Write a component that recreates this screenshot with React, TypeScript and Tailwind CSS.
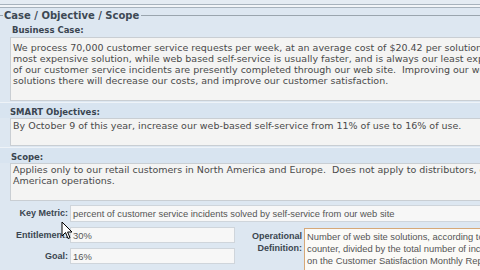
import React from 'react';

const boxText = 'font-["DejaVu_Sans",Verdana,sans-serif] text-[9.5px] leading-[11px] text-[#4a4a4a] whitespace-pre';
const label = 'font-["DejaVu_Sans",Verdana,sans-serif] font-bold text-[8.5px] leading-[11px] text-[#3a4550]';
const smallLabel = 'font-["Liberation_Sans",Arial,sans-serif] font-bold text-[9px] leading-[11px] text-[#3a4550]';
const inputText = 'font-["Liberation_Sans",Arial,sans-serif] text-[9.4px] leading-[11px] text-[#555]';

const Cursor: React.FC = () => (
  <svg className="absolute left-[61px] top-[221px]" width="12" height="19" viewBox="0 0 12 19">
    <path d="M1 1 L1 15 L4.5 11.5 L7 17.5 L9 16.7 L6.6 11 L11 11 Z" fill="#fff" stroke="#000" strokeWidth="1" />
  </svg>
);

const App: React.FC = () => {
  return (
    <div className="relative w-[480px] h-[270px] overflow-hidden bg-[#dde7f1] leading-[11px]">
      {/* top separator */}
      <div className="h-[4px] bg-[#e4ebf2]" />
      <div className="h-[1px] bg-[#a7b2bc]" />
      <div className="h-[2px] bg-[#f2f5f8]" />
      <div className="h-[1px] bg-[#a7b2bc]" />

      {/* legend */}
      <div className="flex items-center mt-[1px] h-[13px]">
        <div className="w-[3px] h-[1px] bg-[#9aa5ae]" />
        <div className='shrink-0 px-[1px] font-["DejaVu_Sans",Verdana,sans-serif] font-bold text-[10px] leading-[12px] text-[#3d4954]'>
          Case / Objective / Scope
        </div>
        <div className="flex-1 h-[1px] bg-[#9aa5ae] ml-[1px]" />
      </div>

      {/* business case */}
      <div className={`pl-[12px] pt-[3px] h-[15px] ${label}`}>Business Case:</div>
      <div className={`ml-[10px] w-[480px] h-[64px] border border-[#c9ced3] bg-[#f4f4f3] px-[2px] pt-[4px] ${boxText}`}>
        <div>We process 70,000 customer service requests per week, at an average cost of $20.42 per solution.  Email is the</div>
        <div>most expensive solution, while web based self-service is usually faster, and is always our least expensive option.</div>
        <div>of our customer service incidents are presently completed through our web site.  Improving our web site</div>
        <div>solutions there will decrease our costs, and improve our customer satisfaction.</div>
      </div>

      {/* smart objectives */}
      <div className={`mt-[1px] pl-[10px] pt-[4px] h-[16px] bg-[#d8e4f0] border-t border-[#eef3f8] ${label}`}>SMART Objectives:</div>
      <div className={`ml-[10px] w-[480px] h-[28px] border border-[#c9ced3] bg-[#f4f4f3] px-[2px] pt-[1px] ${boxText}`}>
        By October 9 of this year, increase our web-based self-service from 11% of use to 16% of use.
      </div>

      {/* scope */}
      <div className={`mt-[1px] pl-[11px] pt-[4px] h-[16px] bg-[#d8e4f0] border-t border-[#eef3f8] ${label}`}>Scope:</div>
      <div className={`ml-[10px] w-[480px] h-[38px] border border-[#c9ced3] bg-[#f4f4f3] px-[2px] ${boxText}`}>
        <div>Applies only to our retail customers in North America and Europe.  Does not apply to distributors, or South</div>
        <div>American operations.</div>
      </div>

      {/* key metric */}
      <div className="flex items-center mt-[4px] h-[17px]">
        <div className={`shrink-0 w-[70px] text-right pr-[2px] ${smallLabel}`}>Key Metric:</div>
        <div className={`shrink-0 w-[420px] h-[17px] border border-[#cfd5db] bg-[#f7f7f7] px-[2px] flex items-center whitespace-nowrap ${inputText}`}>
          percent of customer service incidents solved by self-service from our web site
        </div>
      </div>

      <div className="flex mt-[5px]">
        <div className="shrink-0 flex flex-col gap-[5px] w-[236px]">
          <div className="flex items-center h-[16px]">
            <div className={`shrink-0 w-[70px] text-right pr-[2px] ${smallLabel}`}>Entitlement:</div>
            <div className={`shrink-0 w-[165px] h-[16px] border border-[#cfd5db] bg-[#f7f7f7] px-[2px] flex items-center ${inputText}`}>30%</div>
          </div>
          <div className="flex items-center h-[16px]">
            <div className={`shrink-0 w-[70px] text-right pr-[2px] ${smallLabel}`}>Goal:</div>
            <div className={`shrink-0 w-[165px] h-[16px] border border-[#cfd5db] bg-[#f7f7f7] px-[2px] flex items-center ${inputText}`}>16%</div>
          </div>
        </div>
        <div className={`shrink-0 w-[68px] text-right pr-[2px] pt-[3px] ${smallLabel} leading-[12px]`}>
          <div>Operational</div>
          <div>Definition:</div>
        </div>
        <div className={`shrink-0 w-[200px] h-[50px] mt-[1px] border border-[#d6a878] bg-[#fbfaf7] px-[2px] pt-[2px] whitespace-nowrap ${inputText} leading-[12px]`}>
          <div>Number of web site solutions, according to the</div>
          <div>counter, divided by the total number of incidents</div>
          <div>on the Customer Satisfaction Monthly Report</div>
        </div>
      </div>

      <Cursor />
    </div>
  );
};

export default App;
